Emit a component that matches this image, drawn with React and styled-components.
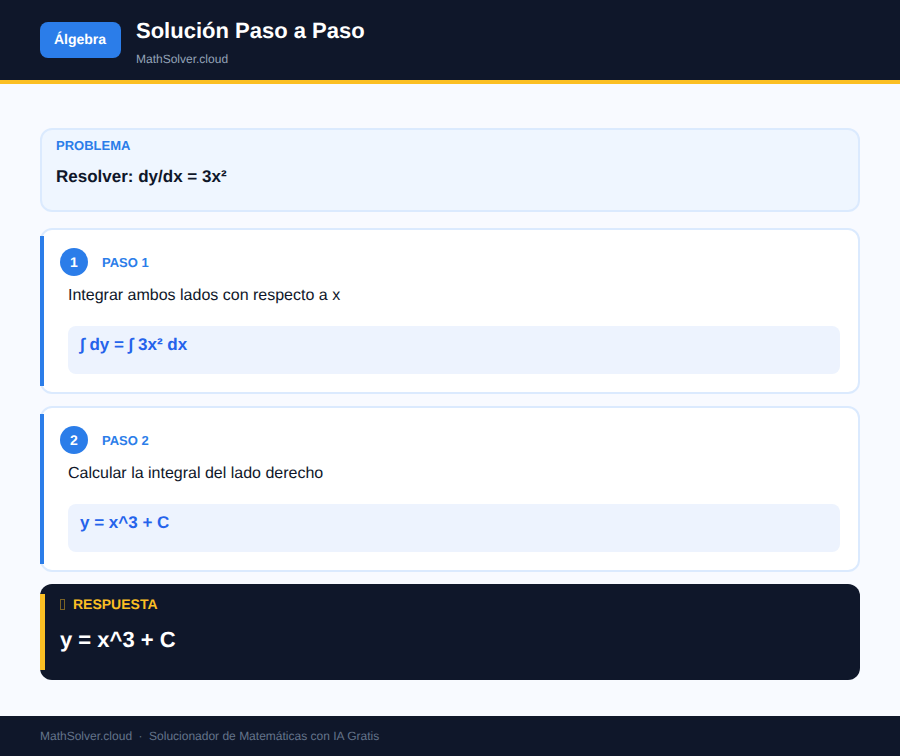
import React from "react";
import styled, { createGlobalStyle } from "styled-components";

const GlobalStyle = createGlobalStyle`
  * {
    box-sizing: border-box;
  }
  html,
  body {
    margin: 0;
    padding: 0;
  }
  body {
    background: #f8faff;
    font-family: "Liberation Sans", Arial, sans-serif;
    color: #0f172a;
    text-rendering: geometricPrecision;
  }
`;

const steps = [
  {
    num: 1,
    text: "Integrar ambos lados con respecto a x",
    formula: "∫ dy = ∫ 3x² dx",
  },
  {
    num: 2,
    text: "Calcular la integral del lado derecho",
    formula: "y = x^3 + C",
  },
];

const App = () => {
  return (
    <Page>
      <GlobalStyle />
      <Header>
        <Badge>Álgebra</Badge>
        <TitleBlock>
          <Title>Solución Paso a Paso</Title>
          <Subtitle>MathSolver.cloud</Subtitle>
        </TitleBlock>
      </Header>
      <Main>
        <ProblemCard>
          <ProblemLabel>PROBLEMA</ProblemLabel>
          <ProblemText>Resolver: dy/dx = 3x²</ProblemText>
        </ProblemCard>
        {steps.map((step) => (
          <StepCard key={step.num}>
            <StepHead>
              <StepNum>{step.num}</StepNum>
              <StepLabel>PASO {step.num}</StepLabel>
            </StepHead>
            <StepText>{step.text}</StepText>
            <Formula>{step.formula}</Formula>
          </StepCard>
        ))}
        <AnswerCard>
          <AnswerHead>
            <MissingGlyph />
            <AnswerLabel>RESPUESTA</AnswerLabel>
          </AnswerHead>
          <AnswerText>y = x^3 + C</AnswerText>
        </AnswerCard>
      </Main>
      <Footer>
        <span>MathSolver.cloud</span>
        <FooterDot>·</FooterDot>
        <span>Solucionador de Matemáticas con IA Gratis</span>
      </Footer>
    </Page>
  );
};

const Page = styled.div`
  width: 900px;
  height: 756px;
  display: flex;
  flex-direction: column;
  overflow: hidden;
`;

const Header = styled.header`
  height: 84px;
  flex-shrink: 0;
  display: flex;
  align-items: flex-start;
  gap: 15px;
  padding: 0 40px;
  background: #0f172a;
  border-bottom: 4px solid #fbbf24;
`;

const Badge = styled.div`
  margin-top: 22px;
  width: 81px;
  height: 36px;
  display: flex;
  align-items: center;
  justify-content: center;
  background: #2b7de9;
  border-radius: 8px;
  color: #fff;
  font-size: 14px;
  font-weight: 700;
  padding: 0 1px 2px 0;
`;

const TitleBlock = styled.div`
  display: flex;
  flex-direction: column;
`;

const Title = styled.h1`
  margin: 18px 0 0;
  font-size: 22px;
  line-height: 26px;
  font-weight: 700;
  color: #fff;
`;

const Subtitle = styled.div`
  margin-top: 7px;
  font-size: 12px;
  line-height: 16px;
  color: #94a3b8;
`;

const Main = styled.main`
  flex: 1;
  display: flex;
  flex-direction: column;
  padding: 44px 40px 0;
`;

const ProblemCard = styled.section`
  height: 84px;
  margin-bottom: 16px;
  padding: 0 14px;
  background: #eff6ff;
  border: 2px solid #dbeafe;
  border-radius: 12px;
`;

const ProblemLabel = styled.div`
  margin-top: 8px;
  font-size: 13px;
  line-height: 16px;
  font-weight: 700;
  color: #2b7de9;
`;

const ProblemText = styled.div`
  margin-top: 12px;
  font-size: 17px;
  line-height: 22px;
  font-weight: 700;
  color: #0f172a;
`;

const StepCard = styled.section`
  position: relative;
  height: 166px;
  margin-bottom: 12px;
  padding: 18px 18px 0 26px;
  background: #fff;
  border: 2px solid #dbeafe;
  border-radius: 12px;

  &::before {
    content: "";
    position: absolute;
    left: -2px;
    top: 6px;
    bottom: 6px;
    width: 4px;
    background: #2b7de9;
  }
`;

const StepHead = styled.div`
  display: flex;
  align-items: center;
  gap: 14px;
  margin-left: -8px;
`;

const StepNum = styled.div`
  width: 28px;
  height: 28px;
  display: flex;
  align-items: center;
  justify-content: center;
  border-radius: 50%;
  background: #2b7de9;
  color: #fff;
  font-size: 14px;
  font-weight: 700;
`;

const StepLabel = styled.div`
  padding-top: 1px;
  font-size: 13px;
  line-height: 16px;
  font-weight: 700;
  color: #2b7de9;
`;

const StepText = styled.p`
  margin: 10px 0 0;
  font-size: 16px;
  line-height: 20px;
  color: #0f172a;
`;

const Formula = styled.div`
  height: 48px;
  margin-top: 20px;
  padding: 8px 12px 0;
  background: #edf3fe;
  border-radius: 8px;
  color: #2563eb;
  font-size: 17px;
  line-height: 22px;
  font-weight: 700;
`;

const AnswerCard = styled.section`
  position: relative;
  height: 96px;
  padding: 12px 20px 0;
  background: #0f172a;
  border-radius: 12px;

  &::before {
    content: "";
    position: absolute;
    left: 0;
    top: 10px;
    bottom: 10px;
    width: 5px;
    background: #fbbf24;
  }
`;

const AnswerHead = styled.div`
  display: flex;
  align-items: center;
  gap: 8px;
`;

const MissingGlyph = styled.span`
  width: 5px;
  height: 11px;
  border: 1px solid #7a6225;
`;

const AnswerLabel = styled.div`
  font-size: 14px;
  line-height: 16px;
  font-weight: 700;
  color: #fbbf24;
`;

const AnswerText = styled.div`
  margin-top: 14px;
  font-size: 22px;
  line-height: 28px;
  font-weight: 700;
  color: #fff;
`;

const Footer = styled.footer`
  height: 40px;
  flex-shrink: 0;
  display: flex;
  align-items: center;
  padding: 0 40px;
  background: #0f172a;
  color: #64748b;
  font-size: 12px;
`;

const FooterDot = styled.span`
  margin: 0 6.5px;
`;

export default App;
